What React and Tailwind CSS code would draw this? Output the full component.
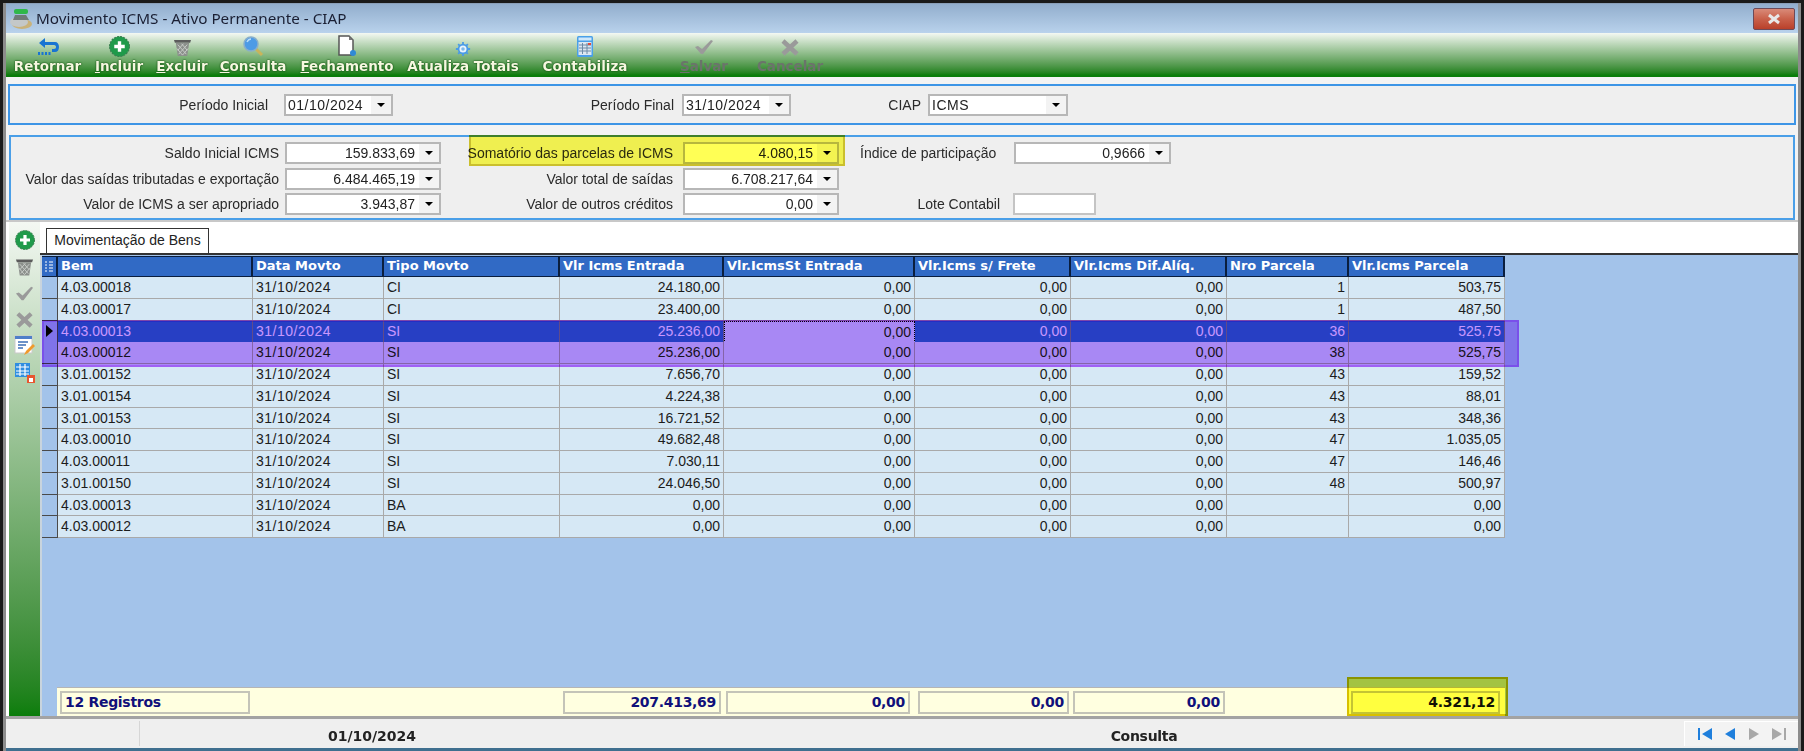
import React from "react";

const cols = "grid grid-cols-[16px_195px_131px_176px_164px_191px_156px_156px_122px_156px]";

const headers = [
  "Bem",
  "Data Movto",
  "Tipo Movto",
  "Vlr Icms Entrada",
  "Vlr.IcmsSt Entrada",
  "Vlr.Icms s/ Frete",
  "Vlr.Icms Dif.Alíq.",
  "Nro Parcela",
  "Vlr.Icms Parcela",
];

const rows = [
  ["4.03.00018", "CI", "24.180,00", "1", "503,75"],
  ["4.03.00017", "CI", "23.400,00", "1", "487,50"],
  ["4.03.00013", "SI", "25.236,00", "36", "525,75"],
  ["4.03.00012", "SI", "25.236,00", "38", "525,75"],
  ["3.01.00152", "SI", "7.656,70", "43", "159,52"],
  ["3.01.00154", "SI", "4.224,38", "43", "88,01"],
  ["3.01.00153", "SI", "16.721,52", "43", "348,36"],
  ["4.03.00010", "SI", "49.682,48", "47", "1.035,05"],
  ["4.03.00011", "SI", "7.030,11", "47", "146,46"],
  ["3.01.00150", "SI", "24.046,50", "48", "500,97"],
  ["4.03.00013", "BA", "0,00", "", "0,00"],
  ["4.03.00012", "BA", "0,00", "", "0,00"],
];

const PlusIcon = ({ size = 20 }) => (
  <svg width={size} height={size} viewBox="0 0 20 20">
    <circle cx="10" cy="10" r="9.5" fill="#1f9a4a" stroke="#3c7d50" strokeDasharray="2 1" />
    <path d="M10 5v10M5 10h10" stroke="#fff" strokeWidth="3.2" />
  </svg>
);

const TrashIcon = ({ w = 20, h = 20 }) => (
  <svg width={w} height={h} viewBox="0 0 20 20">
    <path d="M1 2h18l-1 3H2z" fill="#5c5c5c" />
    <path d="M3 5h14l-2 14H5z" fill="#8b8f8b" />
    <path d="M5 7l9 10M9 6l6 7M4 11l6 7M15 7L6 17M11 6l-6 7M16 11l-6 7" stroke="#c9cec9" strokeWidth="1" />
  </svg>
);

const CheckIcon = ({ size = 20 }) => (
  <svg width={size} height={size} viewBox="0 0 20 20">
    <path d="M1 10l3-1 4 3 9-9 2 1-10 13h-2z" fill="#9a9a9a" />
  </svg>
);

const CrossIcon = ({ size = 20 }) => (
  <svg width={size} height={size} viewBox="0 0 20 20">
    <path d="M3 4l14 13M17 4L3 17" stroke="#9a9a9a" strokeWidth="4.5" />
  </svg>
);

const BackIcon = () => (
  <svg width="22" height="20" viewBox="0 0 22 20">
    <path d="M8 1L2 6l6 5V8h9c1.5 0 2 1 2 2s-.5 2-2 2h-2v3h3c2.5 0 4-2 4-5s-1.5-5-4-5H8z" fill="#1874d2" />
    <path d="M1 15h2v3H1zM4.500 15h2v3h-2zM8 15h2v3H8zM11.500 15h2v3h-2z" fill="#1874d2" />
  </svg>
);

const SearchIcon = () => (
  <svg width="22" height="22" viewBox="0 0 22 22">
    <path d="M13 13l7 7" stroke="#c9b45a" strokeWidth="3" />
    <circle cx="9" cy="9" r="7" fill="#4d9be6" stroke="#88aecb" strokeWidth="1.500" />
    <path d="M5 7c1-2 2-3 4-3" stroke="#b9dcf7" strokeWidth="1.500" fill="none" />
  </svg>
);

const DocIcon = () => (
  <svg width="20" height="22" viewBox="0 0 20 22">
    <path d="M2 1h10l4 4v15H2z" fill="#fff" stroke="#555" strokeWidth="1.500" />
    <path d="M12 1v4h4z" fill="#777" />
    <circle cx="16" cy="18" r="3" fill="#2f8ad6" />
  </svg>
);

const GearIcon = () => (
  <svg width="16" height="16" viewBox="0 0 18 18">
    <circle cx="9" cy="9" r="5" fill="#eaf4fc" stroke="#4a9be6" strokeWidth="2" />
    <path d="M9 1v3M9 14v3M1 9h3M14 9h3M3.500 3.500l2 2M12.500 12.500l2 2M14.500 3.500l-2 2M5.500 12.500l-2 2" stroke="#4a9be6" strokeWidth="2" />
    <circle cx="9" cy="9" r="2" fill="#7fb8ea" />
  </svg>
);

const CalcIcon = () => (
  <svg width="16" height="21" viewBox="0 0 16 21">
    <rect width="16" height="21" rx="1.500" fill="#4aa0e8" />
    <rect x="1.500" y="1.500" width="13" height="3" fill="#cfe8fb" />
    <rect x="1.500" y="6" width="13" height="13" fill="#dbe7f1" />
    <path d="M2 9h12M2 12h12M2 15h12M5.500 7v11M10 7v11" stroke="#6d8aa5" />
    <rect x="11" y="7" width="3" height="2" fill="#e24a3c" />
  </svg>
);

const EditIcon = () => (
  <svg width="22" height="22" viewBox="0 0 22 22">
    <rect x="1" y="1" width="17" height="17" fill="#fff" stroke="#c9c9c9" />
    <rect x="1" y="1" width="17" height="3" fill="#4f7fc9" />
    <path d="M4 7h10M4 10h8M4 13h5" stroke="#3c6fb8" strokeWidth="1.500" />
    <path d="M10 20l2-4 7-7 2 2-7 7z" fill="#f09a2c" />
  </svg>
);

const TableSaveIcon = () => (
  <svg width="22" height="22" viewBox="0 0 22 22">
    <rect x="1" y="1" width="15" height="14" fill="#2f8ee0" />
    <path d="M2 5h13M2 9h13M2 12h13M6 2v12M11 2v12" stroke="#fff" strokeWidth="1.200" />
    <rect x="13" y="13" width="8" height="8" fill="#e8562f" />
    <rect x="15" y="16" width="4" height="4" fill="#fff" />
  </svg>
);

const WindowIcon = () => (
  <svg width="24" height="24" viewBox="0 0 24 24">
    <ellipse cx="13" cy="17" rx="10" ry="5" fill="#c9b27a" />
    <ellipse cx="10" cy="15" rx="9" ry="5" fill="#c4c8c8" />
    <rect x="5" y="2" width="14" height="5" rx="2" fill="#2fb84a" />
    <path d="M6 8h11l3 5H4z" fill="#6f7a78" />
  </svg>
);

const ToolButton = ({ w, icon, label, mark, off }) => (
  <div className={`${w} flex flex-col items-center shrink-0`}>
    <div className="h-[24px] flex items-end justify-center">{icon}</div>
    <span
      className={
        off
          ? "mt-[1px] text-[13.5px] leading-[17px] font-bold whitespace-nowrap text-[#6b736b] font-['DejaVu_Sans',sans-serif]"
          : "mt-[1px] text-[13.5px] leading-[17px] font-bold whitespace-nowrap text-[#f6f8e0] [text-shadow:0_0_1px_#0b4a0b,0_0_2px_#0b4a0b] font-['DejaVu_Sans',sans-serif]"
      }
    >
      {mark ? <span className="underline">{label[0]}</span> : label[0]}
      {label.slice(1)}
    </span>
  </div>
);

const Combo = ({ w, value, left }) => (
  <div className={`${w} h-[22px] shrink-0 flex items-stretch bg-white border-2 border-[#b7b7b7]`}>
    <span
      className={`flex-1 text-[14px] leading-[19px] text-[#222] ${
        left ? "pl-[2px] text-left tracking-[0.5px]" : "pr-[4px] text-right"
      }`}
    >
      {value}
    </span>
    <span className="w-[20px] bg-[#f3f3f3] flex items-center justify-center">
      <span className="w-0 h-0 border-x-[4px] border-x-transparent border-t-[4px] border-t-black" />
    </span>
  </div>
);

const Label = ({ w, children, left }) => (
  <span className={`${w} shrink-0 pt-[1px] whitespace-nowrap text-[14px] text-[#2a2a2a] ${left ? "text-left" : "text-right"}`}>
    {children}
  </span>
);

const Row = ({ row, index }) => {
  const selected = index === 2;
  const text = selected ? "text-white" : "text-[#1c1c1c]";
  const bg = selected ? "bg-[#316ac5]" : "bg-[#d6e8f5]";
  const line = selected ? "border-[#7b7f8a]" : "border-[#a9a9a9]";
  const cell = `h-full px-[3px] border-r border-b ${line} leading-[21px] whitespace-nowrap overflow-hidden`;
  return (
    <div className={`${cols} w-[1463px] h-[21.75px] text-[14px] ${text}`}>
      <div className="h-full bg-[#a3c3ea] border-r border-b border-[#4a4a4a] flex items-center justify-center">
        {selected && <span className="w-0 h-0 border-y-[6px] border-y-transparent border-l-[7px] border-l-black" />}
      </div>
      <div className={`${cell} ${bg}`}>{row[0]}</div>
      <div className={`${cell} ${bg} tracking-[0.5px]`}>31/10/2024</div>
      <div className={`${cell} ${bg}`}>{row[1]}</div>
      <div className={`${cell} ${bg} text-right`}>{row[2]}</div>
      <div
        className={
          selected
            ? "h-full px-[3px] bg-[#d6e8f5] text-[#1c1c1c] border border-dotted border-black leading-[20px] text-right"
            : `${cell} ${bg} text-right`
        }
      >
        0,00
      </div>
      <div className={`${cell} ${bg} text-right`}>0,00</div>
      <div className={`${cell} ${bg} text-right`}>0,00</div>
      <div className={`${cell} ${bg} text-right`}>{row[3]}</div>
      <div className={`${cell} ${bg} text-right`}>{row[4]}</div>
    </div>
  );
};

const TotalBox = ({ className, children }) => (
  <div
    className={`${className} h-[23px] border-2 border-[#c4c4b8] px-[3px] text-[14px] leading-[19px] font-bold text-[#10107a] font-['DejaVu_Sans',sans-serif] tracking-[-0.3px]`}
  >
    {children}
  </div>
);

const App = () => {
  return (
    <div className="w-[1804px] h-[751px] overflow-hidden flex bg-[#1a1a1a] pt-[3px] font-['Liberation_Sans',sans-serif]">
      <div className="w-[3px] bg-[#1a1a1a] shrink-0" />
      <div className="w-[3px] bg-[#8c8c8c] shrink-0" />

      <div className="w-[1792px] shrink-0 flex flex-col bg-[#f3f3f3] border-t border-[#8a9fb8]">
        {/* Title bar */}
        <div className="h-[29px] shrink-0 flex items-center bg-gradient-to-b from-[#92aecd] to-[#b9d2ec] pl-[3px] pr-[3px]">
          <WindowIcon />
          <span className="ml-[3px] text-[15.25px] text-[#1a1f33] font-['Noto_Sans',sans-serif]">
            Movimento ICMS - Ativo Permanente - CIAP
          </span>
          <div className="ml-auto w-[42px] h-[22px] rounded-[2px] border border-[#6d4a58] bg-gradient-to-b from-[#d98a78] via-[#c9604a] to-[#b9402a] flex items-center justify-center">
            <svg width="14" height="12" viewBox="0 0 14 12">
              <path d="M2 2l10 8M12 2L2 10" stroke="#e8e8e8" strokeWidth="3" />
            </svg>
          </div>
        </div>

        {/* Toolbar */}
        <div className="h-[44px] shrink-0 flex items-start bg-gradient-to-b from-[#f4f8f3] to-[#0a7d0a] border-b-2 border-[#0a7d0a]">
          <ToolButton w="w-[83px]" icon={<BackIcon />} label="Retornar" />
          <ToolButton w="w-[60px]" icon={<PlusIcon size={21} />} label="Incluir" mark />
          <ToolButton w="w-[66px]" icon={<TrashIcon w={19} h={19} />} label="Excluir" mark />
          <ToolButton w="w-[76px]" icon={<SearchIcon />} label="Consulta" mark />
          <ToolButton w="w-[112px]" icon={<DocIcon />} label="Fechamento" mark />
          <ToolButton w="w-[120px]" icon={<GearIcon />} label="Atualiza Totais" />
          <ToolButton w="w-[124px]" icon={<CalcIcon />} label="Contabiliza" />
          <ToolButton w="w-[114px]" icon={<CheckIcon />} label="Salvar" mark off />
          <ToolButton w="w-[58px]" icon={<CrossIcon />} label="Cancelar" off />
        </div>

        {/* Periodo */}
        <div className="mt-[7px] ml-[2px] w-[1788px] h-[41px] shrink-0 flex items-center bg-[#efefef] border-2 border-[#3d95e6]">
          <Label w="w-[258px]">Período Inicial</Label>
          <div className="w-[16px] shrink-0" />
          <Combo w="w-[109px]" value="01/10/2024" left />
          <Label w="w-[281px]">Período Final</Label>
          <div className="w-[8px] shrink-0" />
          <Combo w="w-[109px]" value="31/10/2024" left />
          <Label w="w-[130px]">CIAP</Label>
          <div className="w-[7px] shrink-0" />
          <Combo w="w-[140px]" value="ICMS" left />
        </div>

        {/* Totais */}
        <div className="relative mt-[10px] ml-[3px] w-[1786px] h-[85px] shrink-0 flex flex-col pt-[5px] gap-[3.5px] bg-[#efefef] border-2 border-[#4a9fe8]">
          <div className="flex items-center h-[22px]">
            <Label w="w-[268px]">Saldo Inicial ICMS</Label>
            <div className="w-[6px] shrink-0" />
            <Combo w="w-[156px]" value="159.833,69" />
            <Label w="w-[232px]">Somatório das parcelas de ICMS</Label>
            <div className="w-[10px] shrink-0" />
            <Combo w="w-[156px]" value="4.080,15" />
            <div className="w-[21px] shrink-0" />
            <Label w="w-[154px]" left>Índice de participação</Label>
            <Combo w="w-[157px]" value="0,9666" />
          </div>
          <div className="flex items-center h-[22px]">
            <Label w="w-[268px]">Valor das saídas tributadas e exportação</Label>
            <div className="w-[6px] shrink-0" />
            <Combo w="w-[156px]" value="6.484.465,19" />
            <Label w="w-[232px]">Valor total de saídas</Label>
            <div className="w-[10px] shrink-0" />
            <Combo w="w-[156px]" value="6.708.217,64" />
          </div>
          <div className="flex items-center h-[22px]">
            <Label w="w-[268px]">Valor de ICMS a ser apropriado</Label>
            <div className="w-[6px] shrink-0" />
            <Combo w="w-[156px]" value="3.943,87" />
            <Label w="w-[232px]">Valor de outros créditos</Label>
            <div className="w-[10px] shrink-0" />
            <Combo w="w-[156px]" value="0,00" />
            <Label w="w-[161px]">Lote Contabil</Label>
            <div className="w-[13px] shrink-0" />
            <div className="w-[83px] h-[22px] bg-white border-2 border-[#c4c4c4]" />
          </div>
          {/* highlight */}
          <div className="absolute left-[458px] top-[-2px] w-[376px] h-[31px] bg-[#ffff55] border-2 border-[#d8cc30] mix-blend-multiply" />
        </div>

        {/* Lower */}
        <div className="flex-1 min-h-0 flex flex-col border-t-2 border-[#c8c8c8] bg-white">
          <div className="h-[494px] shrink-0 flex pl-[3px]">
            {/* Side bar */}
            <div className="w-[31px] shrink-0 flex flex-col items-center pt-[5px] bg-gradient-to-b from-[#f4f8f3] to-[#0a7d0a]">
              <div className="h-[26.5px] flex items-center"><PlusIcon size={20} /></div>
              <div className="h-[26.5px] flex items-center"><TrashIcon w={19} h={20} /></div>
              <div className="h-[26.5px] flex items-center"><CheckIcon size={19} /></div>
              <div className="h-[26.5px] flex items-center"><CrossIcon size={19} /></div>
              <div className="h-[26.5px] flex items-center"><EditIcon /></div>
              <div className="h-[26.5px] flex items-center"><TableSaveIcon /></div>
            </div>

            <div className="relative flex-1 min-w-0 flex flex-col">
              {/* Tab */}
              <div className="h-[33px] shrink-0 bg-white border-b-2 border-[#333] flex items-end pl-[6px]">
                <div className="w-[163px] h-[25px] border border-b-0 border-[#333] bg-white text-center text-[14px] leading-[23px] text-[#222]">
                  Movimentação de Bens
                </div>
              </div>

              {/* Grid */}
              <div className="flex-1 min-h-0 flex flex-col pt-[1px] bg-[#a3c3ea] border-l-2 border-[#c9d4dd]">
                <div className={`${cols} w-[1463px] h-[21px] shrink-0 bg-[#316ac5] border-y border-[#0a1e3e]`}>
                  <div className="border-r-2 border-[#0a1e3e] flex items-center justify-center">
                    <svg width="10" height="12" viewBox="0 0 10 12">
                      <path d="M1 1h2M5 1h4M1 4h2M5 4h4M1 7h2M5 7h4M1 10h2M5 10h4" stroke="#fff" />
                    </svg>
                  </div>
                  {headers.map((h) => (
                    <div
                      key={h}
                      className="border-r-2 border-[#0a1e3e] px-[3px] text-[13px] leading-[18px] font-bold text-white whitespace-nowrap overflow-hidden font-['DejaVu_Sans',sans-serif]"
                    >
                      {h}
                    </div>
                  ))}
                </div>
                {rows.map((row, i) => (
                  <Row key={i} row={row} index={i} />
                ))}

                {/* Totais do grid */}
                <div className="mt-auto ml-[15px] w-[1448px] h-[29px] shrink-0 flex items-center bg-[#ffffe0] border-t border-[#b5b5b5]">
                  <TotalBox className="ml-[3px] w-[190px]">12 Registros</TotalBox>
                  <TotalBox className="ml-[313px] w-[158px] text-right">207.413,69</TotalBox>
                  <TotalBox className="ml-[5px] w-[184px] text-right">0,00</TotalBox>
                  <TotalBox className="ml-[8px] w-[151px] text-right">0,00</TotalBox>
                  <TotalBox className="ml-[4px] w-[152px] text-right">0,00</TotalBox>
                  <TotalBox className="ml-[126px] w-[149px] text-right">
                    <span className="text-[#111]">4.321,12</span>
                  </TotalBox>
                </div>
              </div>

              {/* Marcacoes do print */}
              <div className="absolute left-[2px] top-[98px] w-[1477px] h-[47px] bg-[#c896fe] border-2 border-[#bf69ff] mix-blend-multiply" />
              <div className="absolute left-[1307px] top-[455px] w-[161px] h-[39px] bg-[#ffff48] border-2 border-[#d8c000] mix-blend-multiply" />
            </div>
          </div>

          {/* Status bar */}
          <div className="border-t-[3px] border-[#a3a3a3] flex-1 min-h-0 flex items-stretch bg-[#efefef] border-b-[3px] border-b-[#3f6f8f] pt-[2px] pb-[2px]">
            <div className="w-[134px] shrink-0 border-r border-[#d6d6d6]" />
            <div className="w-[464px] shrink-0 pt-[3px] text-center text-[14px] leading-[24px] font-bold text-[#222] font-['DejaVu_Sans',sans-serif]">
              01/10/2024
            </div>
            <div className="w-[1080px] shrink-0 pt-[3px] text-center text-[14px] leading-[24px] font-bold text-[#222] font-['DejaVu_Sans',sans-serif] tracking-[-0.3px]">
              Consulta
            </div>
            <div className="w-[115px] shrink-0 flex items-center justify-around px-[6px] bg-[#f3f3f3] border-l border-t border-white">
              <svg width="16" height="14" viewBox="0 0 16 14">
                <path d="M1 1h2v12H1zM15 1v12L5 7z" fill="#1f7fdc" />
              </svg>
              <svg width="12" height="14" viewBox="0 0 12 14">
                <path d="M11 1v12L1 7z" fill="#1f7fdc" />
              </svg>
              <svg width="12" height="14" viewBox="0 0 12 14">
                <path d="M1 1v12l10-6z" fill="#a8a8a8" />
              </svg>
              <svg width="16" height="14" viewBox="0 0 16 14">
                <path d="M1 1v12l10-6zM13 1h2v12h-2z" fill="#a8a8a8" />
              </svg>
            </div>
          </div>
        </div>
      </div>

      <div className="w-[3px] bg-[#8c8c8c] shrink-0" />
      <div className="w-[3px] bg-[#1a1a1a] shrink-0" />
    </div>
  );
};

export default App;
